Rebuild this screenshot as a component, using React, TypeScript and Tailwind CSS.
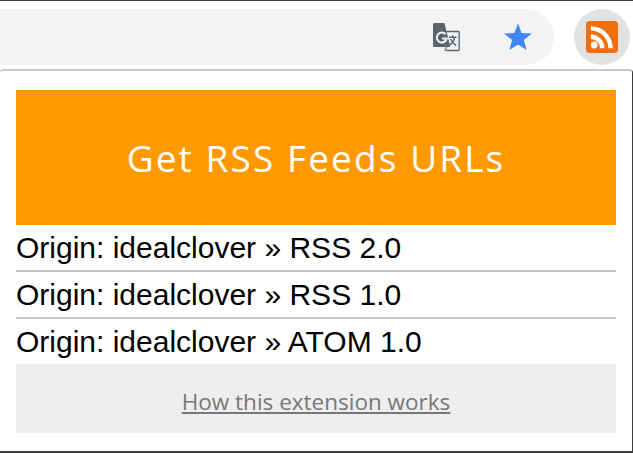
const rows = ['RSS 2.0', 'RSS 1.0', 'ATOM 1.0'];

export default function App() {
  return (
    <div className="w-[633px] h-[453px] flex flex-col bg-white overflow-hidden border-t border-[#3c3c3c]">
      {/* Toolbar */}
      <div className="h-[68px] flex items-start pt-2 shrink-0">
        <div className="w-[554px] h-[55.5px] bg-[#f1f3f4] rounded-r-[28px] flex items-center justify-end">
          {/* Translate icon */}
          <svg viewBox="0 0 30 30" className="w-[30px] h-[30px] mr-[42px]">
            <path d="M14 9.5h13.2a1 1 0 0 1 1 1v17a1 1 0 0 1-1 1H15.5" fill="#f1f3f4" stroke="#5f6368" strokeWidth="1.3" />
            <path d="M2 2.5a1.5 1.5 0 0 1 1.5-1.5h10l5.8 24H3.5A1.5 1.5 0 0 1 2 23.5z" fill="#5f6368" />
            <path d="M15.5 25l-1 3.5h-1" fill="#5f6368" stroke="#5f6368" />
            <path d="M14.6 12.3a5 5 0 1 0 1.1 4.2h-4.6" fill="none" stroke="#f1f3f4" strokeWidth="2.1" />
            <path d="M18 15.2h7.5M21.7 13.2v2M23.8 15.2c-.8 3.8-3.2 6.6-5.3 8M19.8 17c.9 2.5 3 5.2 5.4 6.6" fill="none" stroke="#5f6368" strokeWidth="1.5" />
          </svg>
          {/* Bookmark star */}
          <svg viewBox="0 0 30 30" className="w-[30px] h-[30px] mr-[21px]">
            <path d="M15 1.5l3.6 9.6 10.4.5-8.1 6.5 2.7 10-8.6-5.6-8.6 5.6 2.7-10L1 11.6l10.4-.5z" fill="#4285f4" />
          </svg>
        </div>
        {/* RSS extension button */}
        <div className="ml-5 w-14 h-[55.5px] rounded-full bg-[#e2e2e2] flex items-center justify-center">
          <svg viewBox="0 0 32 32" className="w-8 h-8">
            <rect width="32" height="32" rx="4" fill="#ee6f0c" />
            <circle cx="8.2" cy="24" r="3.4" fill="#fff" />
            <path d="M4.8 13.6a13.6 13.6 0 0 1 13.6 13.6h-4.4a9.2 9.2 0 0 0-9.2-9.2z" fill="#fff" />
            <path d="M4.8 5.2a22 22 0 0 1 22 22h-4.4A17.6 17.6 0 0 0 4.8 9.6z" fill="#fff" />
          </svg>
        </div>
      </div>

      {/* Popup */}
      <div className="flex-1 px-4 pt-[19px] bg-white rounded-t-[4px] border-t-2 border-r border-b-2 border-t-[#c9c9c9] border-r-[#3c3c3c] border-b-[#3c3c3c] box-border">
        <div className="w-[600px]">
          <div className="h-[135px] bg-[#ff9900] flex items-center justify-center text-white text-[37px] tracking-[2.1px] font-['Open_Sans',sans-serif]">
            Get RSS Feeds URLs
          </div>
          {rows.map((r, i) => (
            <div
              key={r}
              className={`flex items-center text-[30px] text-black font-['Liberation_Sans',sans-serif] ${i < 2 ? 'h-[47px] border-b-2 border-[#c4c4c4]' : 'h-[45px]'}`}
            >
              {`Origin: idealclover » ${r}`}
            </div>
          ))}
          <div className="h-[69px] pt-[7px] bg-[#eeeeee] flex items-center justify-center">
            <a href="#" className="text-[22.5px] text-[#777777] underline font-['Open_Sans',sans-serif]">
              How this extension works
            </a>
          </div>
        </div>
      </div>
    </div>
  );
}
